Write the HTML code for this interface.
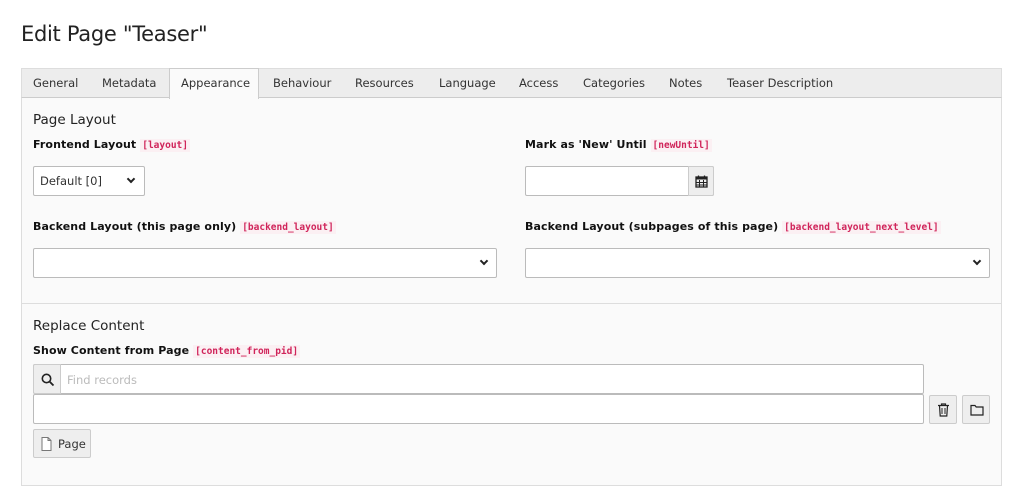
<!DOCTYPE html>
<html><head><style>
*{box-sizing:border-box;margin:0;padding:0}
body{width:1024px;height:491px;background:#fff;font-family:"DejaVu Sans",Verdana,sans-serif;color:#333;position:relative;overflow:hidden}
.a{position:absolute}
h1{position:absolute;left:21px;top:22px;font-size:21px;font-weight:normal;color:#222;font-family:"DejaVu Sans",sans-serif;letter-spacing:-0.3px}
.panel{left:21px;top:68px;width:981px;height:418px;background:#fafafa;border:1px solid #ddd}
.tabs{left:21px;top:68px;width:981px;height:30px;background:#ededed;border:1px solid #ddd;border-bottom:1px solid #ccc}
.tab{position:absolute;top:76px;font-size:11.5px;color:#333}
.act{left:169px;top:68px;width:90px;height:31px;background:#fafafa;border:1px solid #ccc;border-bottom:none}
.h{font-size:13.5px;color:#222}
.lbl{font-size:11px;font-weight:bold;color:#111;letter-spacing:0.1px}
.lbl code{font-family:"DejaVu Sans Mono",monospace;font-weight:bold;font-size:9.5px;color:#d0245a;background:#fbf0f3;padding:1px 2px;letter-spacing:0}
.in{background:#fff;border:1px solid #bbb;border-radius:2px}
.btn{background:#eee;border:1px solid #ccc;border-radius:2px}
.chev{position:absolute;width:6px;height:6px;border-right:2px solid #222;border-bottom:2px solid #222;transform:rotate(45deg)}
</style></head><body>
<h1>Edit Page "Teaser"</h1>
<div class="a panel"></div>
<div class="a tabs"></div>
<div class="a act"></div>
<div class="tab" style="left:33px">General</div>
<div class="tab" style="left:102px">Metadata</div>
<div class="tab" style="left:181px">Appearance</div>
<div class="tab" style="left:273px">Behaviour</div>
<div class="tab" style="left:355px">Resources</div>
<div class="tab" style="left:439px">Language</div>
<div class="tab" style="left:519px">Access</div>
<div class="tab" style="left:583px">Categories</div>
<div class="tab" style="left:669px">Notes</div>
<div class="tab" style="left:727px">Teaser Description</div>

<div class="a h" style="left:33px;top:112px">Page Layout</div>
<div class="a lbl" style="left:33px;top:138px">Frontend Layout <code>[layout]</code></div>
<div class="a in" style="left:33px;top:166px;width:112px;height:30px"><span class="a" style="left:6px;top:7px;font-size:11.5px">Default [0]</span><span class="chev" style="left:94px;top:9px"></span></div>

<div class="a lbl" style="left:525px;top:138px">Mark as 'New' Until <code>[newUntil]</code></div>
<div class="a in" style="left:525px;top:166px;width:189px;height:30px"></div>
<div class="a btn" style="left:688px;top:166px;width:26px;height:30px;border-radius:0 2px 2px 0">
<svg class="a" style="left:6px;top:8px" width="13" height="13" viewBox="0 0 13 13"><rect x="1" y="2" width="11" height="10" fill="none" stroke="#222" stroke-width="1.3"/><rect x="1" y="2" width="11" height="2.5" fill="#222"/><path d="M4.5 5v7M8.5 5v7M1 7.5h11M1 10h11" stroke="#222" stroke-width="1"/><path d="M3.5 0.5v3M9.5 0.5v3" stroke="#222" stroke-width="1.3"/></svg></div>

<div class="a lbl" style="left:33px;top:220px">Backend Layout (this page only) <code>[backend_layout]</code></div>
<div class="a in" style="left:33px;top:248px;width:464px;height:30px"><span class="chev" style="left:447px;top:9px"></span></div>
<div class="a lbl" style="left:525px;top:220px">Backend Layout (subpages of this page) <code>[backend_layout_next_level]</code></div>
<div class="a in" style="left:525px;top:248px;width:465px;height:30px"><span class="chev" style="left:448px;top:9px"></span></div>

<div class="a" style="left:22px;top:303px;width:979px;height:1px;background:#ddd"></div>

<div class="a h" style="left:33px;top:318px">Replace Content</div>
<div class="a lbl" style="left:33px;top:344px">Show Content from Page <code>[content_from_pid]</code></div>
<div class="a in" style="left:33px;top:364px;width:891px;height:30px"></div>
<div class="a btn" style="left:33px;top:364px;width:28px;height:30px;border-radius:2px 0 0 2px">
<svg class="a" style="left:7px;top:8px" width="14" height="14" viewBox="0 0 14 14"><circle cx="5.5" cy="5.5" r="4.2" fill="none" stroke="#222" stroke-width="1.6"/><path d="M8.6 8.6L12.5 12.5" stroke="#222" stroke-width="1.8"/></svg></div>
<div class="a" style="left:67px;top:373px;font-size:11.5px;color:#bbb">Find records</div>
<div class="a in" style="left:33px;top:394px;width:891px;height:30px"></div>
<div class="a btn" style="left:929px;top:395px;width:28px;height:29px">
<svg class="a" style="left:7px;top:7px" width="13" height="14" viewBox="0 0 13 14"><path d="M1 2.5h11M4.5 2.5V1h4v1.5M2.5 2.5l0.7 10.5h6.6l0.7-10.5" fill="none" stroke="#222" stroke-width="1.2"/><path d="M5 5v6M8 5v6" stroke="#222" stroke-width="1"/></svg></div>
<div class="a btn" style="left:962px;top:395px;width:28px;height:29px">
<svg class="a" style="left:7px;top:8px" width="14" height="12" viewBox="0 0 14 12"><path d="M1 1.5h4l1.2 1.5H13v8H1z" fill="none" stroke="#222" stroke-width="1.2"/></svg></div>
<div class="a btn" style="left:33px;top:429px;width:58px;height:29px">
<svg class="a" style="left:7px;top:7px" width="11" height="14" viewBox="0 0 11 14"><path d="M1 .5h6l3 3V13.5H1z M7 .5v3h3" fill="#fff" stroke="#777" stroke-width="1"/></svg>
<span class="a" style="left:24px;top:7px;font-size:11.5px">Page</span></div>
</body></html>
